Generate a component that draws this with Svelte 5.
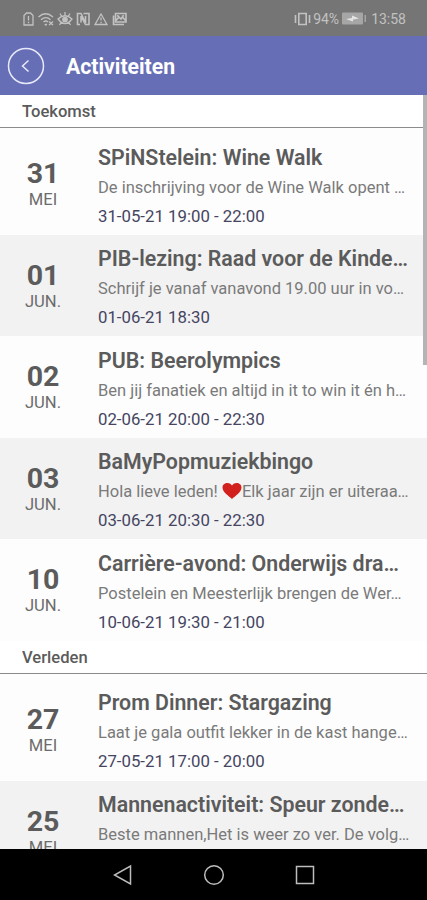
<script lang="ts">
  type Activity = {
    day: string;
    month: string;
    title: string;
    intro: string;
    time?: string;
    heart?: string;
  };

  const sections: { name: string; items: Activity[] }[] = [
    {
      name: 'Toekomst',
      items: [
        { day: '31', month: 'MEI', title: 'SPiNStelein: Wine Walk', intro: 'De inschrijving voor de Wine Walk opent …', time: '31-05-21 19:00 - 22:00' },
        { day: '01', month: 'JUN.', title: 'PIB-lezing: Raad voor de Kinde…', intro: 'Schrijf je vanaf vanavond 19.00 uur in vo…', time: '01-06-21 18:30' },
        { day: '02', month: 'JUN.', title: 'PUB: Beerolympics', intro: 'Ben jij fanatiek en altijd in it to win it én h…', time: '02-06-21 20:00 - 22:30' },
        { day: '03', month: 'JUN.', title: 'BaMyPopmuziekbingo', intro: 'Hola lieve leden! ', heart: 'Elk jaar zijn er uiteraa…', time: '03-06-21 20:30 - 22:30' },
        { day: '10', month: 'JUN.', title: 'Carrière-avond: Onderwijs dra…', intro: 'Postelein en Meesterlijk brengen de Wer…', time: '10-06-21 19:30 - 21:00' },
      ],
    },
    {
      name: 'Verleden',
      items: [
        { day: '27', month: 'MEI', title: 'Prom Dinner: Stargazing', intro: 'Laat je gala outfit lekker in de kast hange…', time: '27-05-21 17:00 - 20:00' },
        { day: '25', month: 'MEI', title: 'Mannenactiviteit: Speur zonde…', intro: 'Beste mannen,Het is weer zo ver. De volg…' },
      ],
    },
  ];
</script>

<div class="phone">
  <div class="status">
    <svg class="status-icons" width="106" height="16" viewBox="0 0 106 16" fill="none" stroke="currentColor" stroke-width="1.3">
      <path d="M4.500 2h4l2.500 2.500V14H2V4.500zM6.500 5v4.500M6.500 10.700v1.500" />
      <path d="M16.500 6q7-6.500 14.500 0M19 8.700q5-4.200 9.500 0M21.500 11q2.300-2 4.500 0M22.800 13l1 1 1-1M27 10.500l4 3.500M31 10.500l-4 3.500" />
      <path d="M36 8q7-6.500 14 0q-7 9-14 0zM43 1v3M38 2.500l1.500 2.500M48 2.500l-1.500 2.500M37.500 14l1.500-2.500M48.500 14l-1.500-2.500" />
      <circle cx="43" cy="8.500" r="2.200" fill="currentColor" />
      <path d="M58 13.500h-2.500V2.500H59l4.500 9.500V5M61.500 2.500H67v11h-3.500L59 5v6.500" stroke-width="1.600" />
      <path d="M79 3l6 10.500H73zM79 6.500v3M79 10.800v1.400" />
      <path d="M93.500 2.500H104v8.500H93.500zM91.500 4.500v9H102M94 9.500l3-3.500 2 2 1.500-2 3 3.500M95 4.500l2 1M102 4.500l-2 1" stroke-width="1.600" />
    </svg>
    <div class="battery">
      <svg width="17" height="14" viewBox="0 0 17 14" fill="none" stroke="currentColor" stroke-width="1.600">
        <path d="M4.800 1.500h7.400v11H4.800zM1.500 3v8M15.500 3v8" />
      </svg>
      <span class="percent">94%</span>
      <svg width="25" height="13" viewBox="0 0 25 13">
        <rect x="0" y="0.500" width="21" height="12" rx="1" fill="#a6a6a6" />
        <rect x="22.500" y="3" width="1.500" height="7" fill="#a5a5a5" />
        <path d="M4 7l6-1V3.500l7 3-6 1v2z" fill="#e4e4e4" />
      </svg>
      <span class="clock">13:58</span>
    </div>
  </div>

  <header>
    <button class="back" aria-label="Terug">
      <svg width="38" height="38" viewBox="0 0 38 38" fill="none" stroke="currentColor">
        <circle cx="19" cy="19" r="17.500" stroke-width="1.500" />
        <path d="M21.500 13.500l-6 5.500 6 5.500" stroke-width="1.500" />
      </svg>
    </button>
    <h1>Activiteiten</h1>
  </header>

  <main>
    {#each sections as section}
      <section>
        <h2>{section.name}</h2>
        {#each section.items as item}
          <article>
            <div class="date">
              <span class="day">{item.day}</span>
              <span class="month">{item.month}</span>
            </div>
            <div class="info">
              <h3>{item.title}</h3>
              <p class="intro">
                {item.intro}{#if item.heart}<svg class="heart" width="20" height="18" viewBox="0 0 20 18"><path d="M10 17C7 14 .5 10.500 .5 5.500C.5 .5 7.500-.5 10 3.500C12.500-.5 19.500 .5 19.500 5.500C19.500 10.500 13 14 10 17z" /></svg>{item.heart}{/if}
              </p>
              {#if item.time}
                <p class="time">{item.time}</p>
              {/if}
            </div>
          </article>
        {/each}
      </section>
    {/each}
    <div class="scrollbar"></div>
  </main>

  <nav>
    <svg width="20" height="22" viewBox="0 0 20 22"><path d="M17.500 2v18L1.500 11z" /></svg>
    <svg width="22" height="22" viewBox="0 0 22 22"><circle cx="11" cy="11" r="9.300" /></svg>
    <svg width="20" height="22" viewBox="0 0 20 22"><rect x="1.500" y="2.500" width="17" height="17" /></svg>
  </nav>
</div>

<style>
  :global(body) {
    margin: 0;
    background: #000;
  }

  .phone {
    display: flex;
    flex-direction: column;
    width: 427px;
    height: 900px;
    overflow: hidden;
    font-family: Roboto, sans-serif;
    color: #5b5b5b;
  }

  h1, h2, h3, p {
    margin: 0;
  }

  .status {
    flex: none;
    display: flex;
    align-items: center;
    justify-content: space-between;
    height: 36px;
    padding: 1px 21px 0 22px;
    box-sizing: border-box;
    background: #757575;
    color: #c2c2c2;
    font-size: 14px;
  }

  .battery {
    display: flex;
    align-items: center;
  }
  .percent {
    margin: 0 3px 0 2px;
  }
  .clock {
    margin-left: 4px;
  }

  header {
    flex: none;
    display: flex;
    align-items: center;
    height: 59px;
    padding-left: 7px;
    box-sizing: border-box;
    background: #666eb6;
    color: #fff;
  }
  .back {
    display: flex;
    padding: 0;
    border: 0;
    background: none;
    color: #e8e9fa;
  }
  h1 {
    margin-left: 21px;
    padding-top: 1px;
    font-size: 21.2px;
    font-weight: 700;
  }

  main {
    position: relative;
    flex: 1;
    overflow: hidden;
    background: #fdfdfd;
  }

  h2 {
    height: 33px;
    margin-bottom: 5px;
    padding-left: 22px;
    box-sizing: border-box;
    border-bottom: 1px solid #8b8b8b;
    background: #fff;
    font-size: 16.6px;
    font-weight: 500;
    line-height: 34px;
  }

  article {
    display: flex;
    height: 101.6px;
  }
  article:nth-of-type(even) {
    background: #f2f2f2;
  }

  .date {
    flex: none;
    display: flex;
    flex-direction: column;
    align-items: center;
    width: 86px;
    margin-right: 12px;
    padding-top: 24px;
    box-sizing: border-box;
  }
  .day {
    font-size: 28.5px;
    font-weight: 700;
    line-height: 34px;
  }
  .month {
    color: #6c6c6c;
    font-size: 16.6px;
    line-height: 18px;
  }

  .info {
    padding-top: 9.5px;
    white-space: nowrap;
  }
  h3 {
    font-size: 21.35px;
    font-weight: 600;
    line-height: 29px;
  }
  .intro {
    height: 30px;
    color: #7a7a7a;
    font-size: 16.5px;
    line-height: 31px;
  }
  .time {
    color: #454562;
    font-size: 16.8px;
    line-height: 28px;
  }
  .heart {
    margin: 0;
    vertical-align: -3px;
    fill: #d2201f;
  }

  .scrollbar {
    position: absolute;
    top: 0;
    right: 0;
    width: 4px;
    height: 270px;
    background: #b4b4b4;
  }

  nav {
    flex: none;
    display: flex;
    align-items: center;
    justify-content: center;
    gap: 70px;
    height: 51px;
    background: #000;
  }
  nav svg {
    fill: none;
    stroke: #bdbdbd;
    stroke-width: 1.5;
  }
</style>
